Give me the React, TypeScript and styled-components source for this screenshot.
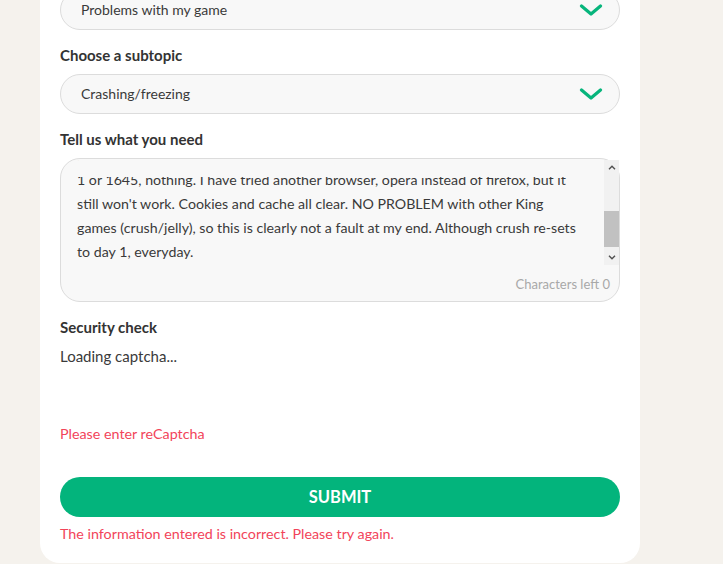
import React, { useLayoutEffect, useRef } from "react";
import styled, { createGlobalStyle } from "styled-components";

const GlobalStyle = createGlobalStyle`
  html, body {
    margin: 0;
    padding: 0;
    background: #f5f2ed;
  }
  body {
    font-family: Lato, "Open Sans", Arial, sans-serif;
    color: #3a3a3a;
    overflow: hidden;
  }
`;

const Page = styled.div`
  height: 564px;
  overflow: hidden;
`;

const Card = styled.form`
  width: 560px;
  margin: -61px 0 0 40px;
  padding: 22px 20px 19px;
  background: #ffffff;
  border-radius: 20px;
  display: flex;
  flex-direction: column;
`;

const Field = styled.div<{ $first?: boolean }>`
  display: flex;
  flex-direction: column;
  gap: 9px;
  margin-top: ${(p) => (p.$first ? "0" : "15px")};
`;

const Label = styled.label`
  font-size: 15px;
  line-height: 20px;
  font-weight: 700;
  color: #333333;
`;

const SelectBox = styled.div`
  box-sizing: border-box;
  height: 40px;
  border: 1px solid #dcdcdc;
  border-radius: 20px;
  background: #f8f8f8;
  display: flex;
  align-items: center;
  justify-content: space-between;
  padding: 0 16px 1px 20px;
  font-size: 14px;
  color: #3a3a3a;
`;

const Chevron = styled.svg`
  width: 24px;
  height: 12px;
  flex: none;
  margin-top: 1px;
`;

const TextBox = styled.div`
  position: relative;
  box-sizing: border-box;
  height: 144px;
  border: 1px solid #dcdcdc;
  border-radius: 20px;
  background: #f8f8f8;
  padding-top: 1px;
  display: flex;
  flex-direction: column;
`;

const TextArea = styled.textarea`
  box-sizing: border-box;
  display: block;
  width: 558px;
  height: 105px;
  margin: 0;
  border: 0;
  outline: none;
  resize: none;
  background: transparent;
  padding: 16px 27px 12px 16px;
  font-family: Lato, "Open Sans", Arial, sans-serif;
  font-size: 14.2px;
  line-height: 24px;
  color: #3a3a3a;
  white-space: pre;
  overflow-x: hidden;
  overflow-y: scroll;
  scrollbar-width: none;
`;

const TopFade = styled.div`
  position: absolute;
  left: 1px;
  right: 18px;
  top: 1px;
  height: 17px;
  border-top-left-radius: 19px;
  background: #f8f8f8;
  pointer-events: none;
`;

const ScrollBar = styled.div`
  position: absolute;
  top: 1px;
  right: 0;
  width: 15px;
  height: 105px;
  background: #f1f1f1;
  display: flex;
  flex-direction: column;
`;

const ScrollButton = styled.div`
  height: 15px;
  flex: none;
  display: flex;
  align-items: center;
  justify-content: center;
`;

const ScrollTrack = styled.div`
  flex: 1;
  display: flex;
  flex-direction: column;
`;

const ScrollThumb = styled.div<{ $offset: number; $size: number }>`
  margin-top: ${(p) => p.$offset}px;
  height: ${(p) => p.$size}px;
  background: #c1c1c1;
`;

const ArrowSvg = styled.svg`
  width: 8px;
  height: 5px;
`;

const Counter = styled.div`
  margin-top: 10px;
  padding-right: 9px;
  text-align: right;
  font-size: 13px;
  line-height: 18px;
  color: #a8a8a8;
`;

const CaptchaBlock = styled.div`
  display: flex;
  flex-direction: column;
`;

const CaptchaBox = styled.div`
  height: 78px;
  font-size: 15px;
  line-height: 20px;
  color: #3a3a3a;
`;

const ErrorText = styled.div<{ $gap?: number }>`
  margin-top: ${(p) => p.$gap ?? 0}px;
  font-size: 14.3px;
  line-height: 20px;
  color: #f2445a;
`;

const SubmitButton = styled.button`
  margin-top: 33px;
  height: 40px;
  border: 0;
  border-radius: 20px;
  background: #03b47c;
  color: #ffffff;
  font-family: Lato, "Open Sans", Arial, sans-serif;
  font-size: 16.5px;
  font-weight: 700;
  cursor: pointer;
`;

const ChevronIcon = () => (
  <Chevron viewBox="0 0 24 12" aria-hidden="true">
    <polyline
      points="2.5,2 12,10 21.5,2"
      fill="none"
      stroke="#07b57c"
      strokeWidth="3.2"
      strokeLinecap="round"
      strokeLinejoin="round"
    />
  </Chevron>
);

const Arrow = ({ up }: { up?: boolean }) => (
  <ArrowSvg viewBox="0 0 8 5" aria-hidden="true">
    <polyline
      points={up ? "1,4.2 4,1.2 7,4.2" : "1,0.8 4,3.8 7,0.8"}
      fill="none"
      stroke="#505050"
      strokeWidth="1.4"
    />
  </ArrowSvg>
);

const Select = ({ value }: { value: string }) => (
  <SelectBox role="combobox">
    <span>{value}</span>
    <ChevronIcon />
  </SelectBox>
);

const MESSAGE = [
  "Since the last update the game freezes every time I try to open it.",
  "It loads to about 90% and then stops, the screen goes white.",
  "I have refreshed many times and restarted the computer.",
  "I have tried to play from level",
  "1 or 1645, nothing. I have tried another browser, opera instead of firefox, but it",
  "still won't work. Cookies and cache all clear. NO PROBLEM with other King",
  "games (crush/jelly), so this is clearly not a fault at my end. Although crush re-sets",
  "to day 1, everyday.",
].join("\n");

export default function App() {
  const ref = useRef<HTMLTextAreaElement>(null);

  useLayoutEffect(() => {
    const el = ref.current;
    if (el) {
      el.scrollTop = el.scrollHeight - el.clientHeight - 11;
    }
  }, []);

  return (
    <Page>
      <GlobalStyle />
      <Card onSubmit={(e) => e.preventDefault()}>
        <Field $first>
          <Label>Choose a topic</Label>
          <Select value="Problems with my game" />
        </Field>
        <Field>
          <Label>Choose a subtopic</Label>
          <Select value="Crashing/freezing" />
        </Field>
        <Field>
          <Label>Tell us what you need</Label>
          <TextBox>
            <TextArea ref={ref} defaultValue={MESSAGE} />
            <TopFade />
            <ScrollBar aria-hidden="true">
              <ScrollButton>
                <Arrow up />
              </ScrollButton>
              <ScrollTrack>
                <ScrollThumb $offset={36} $size={36} />
              </ScrollTrack>
              <ScrollButton>
                <Arrow />
              </ScrollButton>
            </ScrollBar>
            <Counter>Characters left 0</Counter>
          </TextBox>
        </Field>
        <Field>
          <Label>Security check</Label>
          <CaptchaBlock>
            <CaptchaBox>Loading captcha...</CaptchaBox>
            <ErrorText>Please enter reCaptcha</ErrorText>
          </CaptchaBlock>
        </Field>
        <SubmitButton type="submit">SUBMIT</SubmitButton>
        <ErrorText $gap={7}>The information entered is incorrect. Please try again.</ErrorText>
      </Card>
    </Page>
  );
}
